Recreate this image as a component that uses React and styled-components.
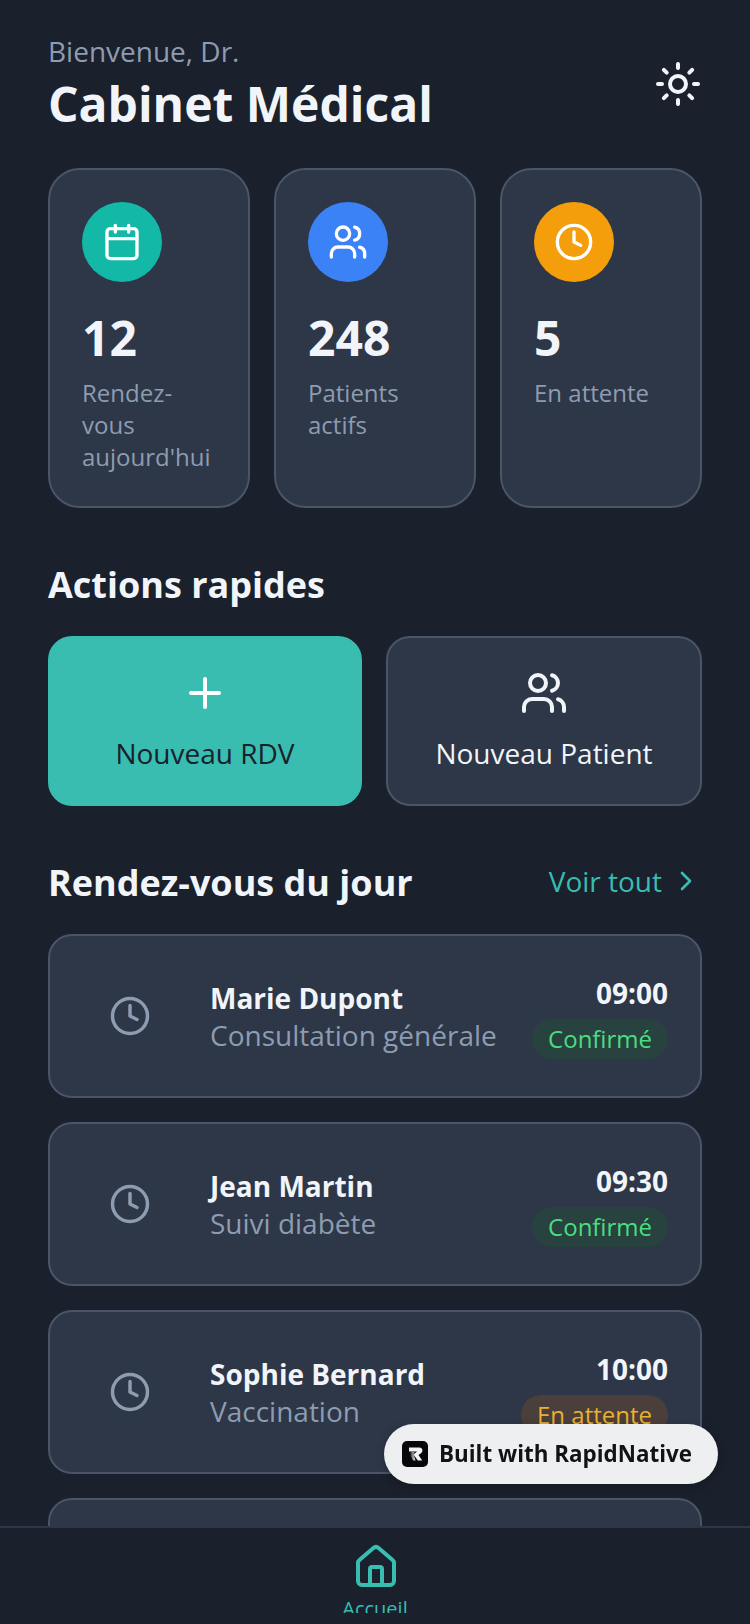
import React from "react";
import styled, { createGlobalStyle } from "styled-components";
import { Sun, Calendar, Users, Clock, Plus, ChevronRight, House } from "lucide-react";

const stats = [
  { icon: Calendar, color: "#14b8a6", value: "12", label: "Rendez-vous aujourd'hui" },
  { icon: Users, color: "#3b82f6", value: "248", label: "Patients actifs" },
  { icon: Clock, color: "#f59e0b", value: "5", label: "En attente" },
];

const appointments = [
  { name: "Marie Dupont", reason: "Consultation générale", time: "09:00", status: "Confirmé", pending: false },
  { name: "Jean Martin", reason: "Suivi diabète", time: "09:30", status: "Confirmé", pending: false },
  { name: "Sophie Bernard", reason: "Vaccination", time: "10:00", status: "En attente", pending: true },
  { name: "Luc Petit", reason: "Contrôle annuel", time: "10:30", status: "Confirmé", pending: false },
];

const App = () => {
  return (
    <Screen>
      <GlobalStyle />
      <Content>
        <Header>
          <div>
            <Welcome>Bienvenue, Dr.</Welcome>
            <Title>Cabinet Médical</Title>
          </div>
          <ThemeToggle>
            <Sun size={48} color="#f1f5f9" />
          </ThemeToggle>
        </Header>

        <StatsRow>
          {stats.map(({ icon: Icon, color, value, label }) => (
            <StatCard key={value}>
              <StatIcon $color={color}>
                <Icon size={40} color="#fff" />
              </StatIcon>
              <StatValue>{value}</StatValue>
              <StatLabel>{label}</StatLabel>
            </StatCard>
          ))}
        </StatsRow>

        <SectionTitle>Actions rapides</SectionTitle>
        <ActionsRow>
          <ActionButton $primary>
            <Plus size={48} color="#fff" />
            <ActionLabel $primary>Nouveau RDV</ActionLabel>
          </ActionButton>
          <ActionButton>
            <Users size={48} color="#f1f5f9" />
            <ActionLabel>Nouveau Patient</ActionLabel>
          </ActionButton>
        </ActionsRow>

        <SectionHeader>
          <SectionTitle as="h2" $flush>Rendez-vous du jour</SectionTitle>
          <SeeAll>
            Voir tout
            <ChevronRight size={32} color="#38bdb0" />
          </SeeAll>
        </SectionHeader>

        <AppointmentList>
          {appointments.map((item) => (
            <AppointmentCard key={item.name}>
              <ClockSlot>
                <Clock size={42} color="#8e9cb1" />
              </ClockSlot>
              <AppointmentInfo>
                <PatientName>{item.name}</PatientName>
                <Reason>{item.reason}</Reason>
              </AppointmentInfo>
              <AppointmentMeta>
                <Time>{item.time}</Time>
                <StatusPill $pending={item.pending}>{item.status}</StatusPill>
              </AppointmentMeta>
            </AppointmentCard>
          ))}
        </AppointmentList>
      </Content>

      <TabBar>
        <TabIcon size={48} color="#38bdb0" />
        <TabLabel>Accueil</TabLabel>
      </TabBar>

      <BuiltWith>
        <BuiltLogo viewBox="0 0 26 26">
          <defs>
            <linearGradient id="stem" x1="0" y1="0" x2="1" y2="0">
              <stop offset="0" stopColor="#333" />
              <stop offset="1" stopColor="#f4f4f4" />
            </linearGradient>
          </defs>
          <rect width="26" height="26" rx="5" fill="#08080a" />
          <path d="M7 6.5h10.5a3 3 0 0 1 1.8 5.4L16.500 14l3.700 5.500h-4.400L11.500 13.500l3.600-3H7z" fill="#f4f4f4" />
          <path d="M8.500 11h4l-1 2 2 6.500h-2.500L8.500 15z" fill="url(#stem)" />
        </BuiltLogo>
        <BuiltText>Built with RapidNative</BuiltText>
      </BuiltWith>
    </Screen>
  );
};

export default App;

const GlobalStyle = createGlobalStyle`
  * {
    box-sizing: border-box;
  }
  body {
    margin: 0;
    background-color: #1a202c;
    font-family: "Open Sans", "Noto Sans", sans-serif;
  }
`;

const Screen = styled.div`
  width: 750px;
  height: 1624px;
  display: flex;
  flex-flow: column;
  overflow: hidden;
  background-color: #1a202c;
`;

const Content = styled.main`
  flex: 1;
  min-height: 0;
  overflow: hidden;
  padding: 32px 48px 0;
`;

const Header = styled.header`
  display: flex;
  align-items: center;
  justify-content: space-between;
  margin-bottom: 32px;
`;

const Welcome = styled.p`
  margin: 0 0 2px;
  font-size: 28px;
  line-height: 38px;
  color: #8e9cb1;
`;

const Title = styled.h1`
  margin: 0;
  font-size: 48px;
  line-height: 64px;
  font-weight: 700;
  color: #f1f5f9;
`;

const ThemeToggle = styled.div`
  display: flex;
  padding: 8px 0 8px 8px;
`;

const StatsRow = styled.section`
  display: grid;
  grid-template-columns: repeat(3, 1fr);
  gap: 24px;
  margin-bottom: 53px;
`;

const StatCard = styled.div`
  height: 340px;
  padding: 32px;
  border: 2px solid #4a5568;
  border-radius: 32px;
  background-color: #2d3748;
`;

const StatIcon = styled.div`
  width: 80px;
  height: 80px;
  display: flex;
  align-items: center;
  justify-content: center;
  border-radius: 50%;
  background-color: ${(p) => p.$color};
  margin-bottom: 24px;
`;

const StatValue = styled.div`
  font-size: 48px;
  line-height: 64px;
  font-weight: 700;
  color: #f1f5f9;
`;

const StatLabel = styled.div`
  margin-top: 7px;
  font-size: 24px;
  line-height: 32px;
  color: #8e9cb1;
`;

const SectionTitle = styled.h2`
  margin: 0 0 ${(p) => (p.$flush ? "0" : "27px")};
  font-size: 36px;
  line-height: 48px;
  font-weight: 700;
  color: #f1f5f9;
`;

const ActionsRow = styled.section`
  display: grid;
  grid-template-columns: 314px 316px;
  gap: 24px;
  margin-bottom: 53px;
`;

const ActionButton = styled.div`
  height: 170px;
  display: flex;
  flex-flow: column;
  align-items: center;
  justify-content: center;
  gap: 16px;
  border-radius: 24px;
  border: 2px solid ${(p) => (p.$primary ? "#38bdb0" : "#4a5568")};
  background-color: ${(p) => (p.$primary ? "#38bdb0" : "#2d3748")};
`;

const ActionLabel = styled.span`
  font-size: 28px;
  line-height: 40px;
  color: ${(p) => (p.$primary ? "#1a202c" : "#f1f5f9")};
`;

const SectionHeader = styled.div`
  display: flex;
  align-items: center;
  justify-content: space-between;
  margin-bottom: 27px;
`;

const SeeAll = styled.div`
  display: flex;
  align-items: center;
  gap: 8px;
  padding-bottom: 4px;
  font-size: 28px;
  line-height: 40px;
  color: #38bdb0;
`;

const AppointmentList = styled.section`
  display: flex;
  flex-flow: column;
  gap: 24px;
`;

const AppointmentCard = styled.article`
  height: 164px;
  flex-shrink: 0;
  display: flex;
  align-items: center;
  padding: 0 32px;
  border: 2px solid #4a5568;
  border-radius: 24px;
  background-color: #2d3748;
`;

const ClockSlot = styled.div`
  width: 96px;
  display: flex;
  justify-content: center;
  margin-right: 32px;
`;

const AppointmentInfo = styled.div`
  flex: 1;
  min-width: 0;
  padding-top: 3px;
`;

const PatientName = styled.div`
  font-size: 28px;
  line-height: 36px;
  font-weight: 700;
  color: #f1f5f9;
`;

const Reason = styled.div`
  font-size: 28px;
  line-height: 39px;
  color: #8e9cb1;
`;

const AppointmentMeta = styled.div`
  display: flex;
  flex-flow: column;
  align-items: flex-end;
  gap: 6px;
`;

const Time = styled.div`
  font-size: 28px;
  line-height: 40px;
  font-weight: 700;
  color: #f1f5f9;
`;

const StatusPill = styled.div`
  padding: 0 16px;
  border-radius: 24px;
  font-size: 24px;
  line-height: 40px;
  color: ${(p) => (p.$pending ? "#eab02e" : "#4ade80")};
  background-color: ${(p) => (p.$pending ? "#4a3f3a" : "#27423f")};
`;

const TabBar = styled.nav`
  height: 98px;
  flex-shrink: 0;
  display: flex;
  flex-flow: column;
  align-items: center;
  padding-top: 15px;
  border-top: 2px solid #2d3748;
  background-color: #1a202c;
`;

const TabIcon = styled(House)`
  margin-left: 2px;
`;

const TabLabel = styled.div`
  height: 18px;
  margin-top: 4px;
  overflow: hidden;
  font-size: 20px;
  line-height: 28px;
  color: #38bdb0;
`;

const BuiltWith = styled.div`
  position: fixed;
  left: 384px;
  top: 1424px;
  width: 334px;
  height: 60px;
  display: flex;
  align-items: center;
  gap: 11px;
  padding-left: 18px;
  border-radius: 30px;
  background-color: #eeeff1;
  box-shadow: 0 2px 8px rgba(0, 0, 0, 0.25);
`;

const BuiltText = styled.span`
  padding-bottom: 2px;
  font-size: 22.4px;
  font-weight: 700;
  color: #111318;
`;

const BuiltLogo = styled.svg`
  width: 26px;
  height: 26px;
`;
